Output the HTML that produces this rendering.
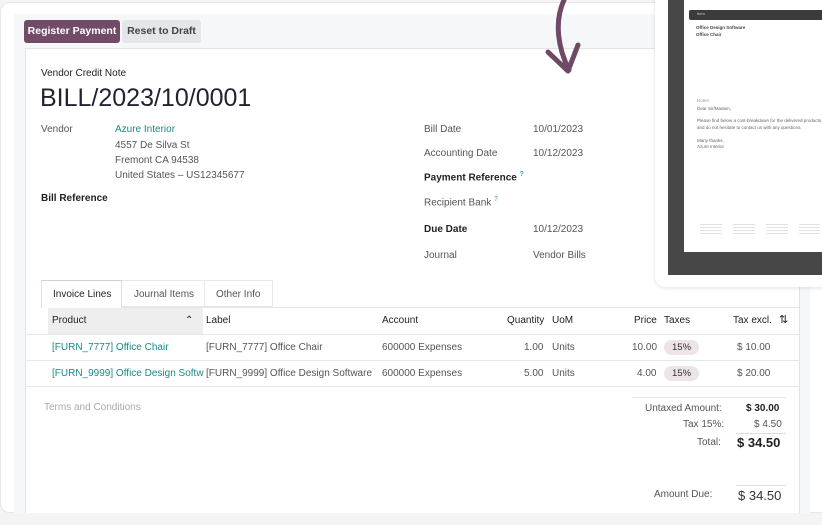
<!DOCTYPE html><html><head><style>
*{box-sizing:border-box;margin:0;padding:0}
body{width:822px;height:525px;overflow:hidden;background:#f4f4f4;font-family:"Liberation Sans",sans-serif;position:relative;color:#222}
.abs{position:absolute}
.outer{left:0;top:2px;width:830px;height:511px;background:#fff;border-radius:10px;border:1px solid #e8e8e8}
.panel{left:14px;top:14px;width:796px;height:499px;background:#f6f7f9}
.sheet{left:25px;top:48px;width:775px;height:465px;background:#fff;border:1px solid #e4e4e4;border-bottom:none}
.btn{top:20px;height:23px;font-size:10.5px;line-height:23px;text-align:center;border-radius:3px;font-weight:bold}
.t{position:absolute;font-size:10px;white-space:nowrap}
.lbl{color:#555}
.link{color:#1a8a87}
.b{font-weight:bold;color:#222}
.badge{position:absolute;background:#ece4e6;border-radius:8px;font-size:9.5px;padding:2px 8px;color:#333}
</style></head><body>
<div class="abs outer"></div>
<div class="abs panel"></div>
<div class="abs btn" style="left:24px;width:96px;background:#714b67;color:#fff">Register Payment</div>
<div class="abs btn" style="left:122px;width:79px;background:#e5e6e9;color:#444">Reset to Draft</div>
<div class="abs sheet"></div>
<svg class="abs" style="left:540px;top:0" width="50" height="80"><path d="M24 0 C14 22,18 48,29 70" stroke="#6f4a64" stroke-width="5" fill="none" stroke-linecap="round"/><path d="M8 52 L28 71 L38 45" stroke="#6f4a64" stroke-width="5" fill="none" stroke-linecap="round" stroke-linejoin="round"/></svg>
<div class="t" style="left:41px;top:68px;font-size:10px">Vendor Credit Note</div>
<div class="t" style="left:40px;top:84px;font-size:25px;color:#1f2430">BILL/2023/10/0001</div>
<div class="t lbl" style="left:41px;top:124px">Vendor</div>
<div class="t link" style="left:115px;top:124px">Azure Interior</div>
<div class="t lbl" style="left:115px;top:140px">4557 De Silva St</div>
<div class="t lbl" style="left:115px;top:155px">Fremont CA 94538</div>
<div class="t lbl" style="left:115px;top:170px">United States – US12345677</div>
<div class="t b" style="left:41px;top:193px">Bill Reference</div>
<div class="t lbl" style="left:424px;top:124px">Bill Date</div><div class="t lbl" style="left:533px;top:124px">10/01/2023</div>
<div class="t lbl" style="left:424px;top:148px">Accounting Date</div><div class="t lbl" style="left:533px;top:148px">10/12/2023</div>
<div class="t b" style="left:424px;top:171px">Payment Reference <sup style="color:#3aa0c8;font-size:7px">?</sup></div>
<div class="t lbl" style="left:424px;top:196px">Recipient Bank <sup style="color:#3aa0c8;font-size:7px">?</sup></div>
<div class="t b" style="left:424px;top:224px">Due Date</div><div class="t lbl" style="left:533px;top:224px">10/12/2023</div>
<div class="t lbl" style="left:424px;top:250px">Journal</div><div class="t lbl" style="left:533px;top:250px">Vendor Bills</div>
<div class="abs" style="left:41px;top:307px;width:759px;border-top:1px solid #e4e4e4"></div>
<div class="abs" style="left:41px;top:280px;width:81px;height:28px;background:#fff;border:1px solid #e0e0e0;border-bottom:none;border-top:1px solid #dccbd4"></div>
<div class="abs" style="left:122px;top:280px;width:83px;height:27px;border:1px solid #e8e8e8;border-left:none"></div>
<div class="abs" style="left:205px;top:280px;width:68px;height:27px;border:1px solid #e8e8e8;border-left:none"></div>
<div class="t" style="left:53px;top:289px">Invoice Lines</div>
<div class="t lbl" style="left:134px;top:289px">Journal Items</div>
<div class="t lbl" style="left:216px;top:289px">Other Info</div>
<div class="abs" style="left:48px;top:308px;width:155px;height:26px;background:#eeeeee"></div>
<div class="t" style="left:52px;top:315px">Product</div><div class="t" style="left:185px;top:315px">&#8963;</div>
<div class="t" style="left:206px;top:315px">Label</div>
<div class="t" style="left:382px;top:315px">Account</div>
<div class="t" style="left:507px;top:315px">Quantity</div>
<div class="t" style="left:552px;top:315px">UoM</div>
<div class="t" style="left:634px;top:315px">Price</div>
<div class="t" style="left:664px;top:315px">Taxes</div>
<div class="t" style="left:733px;top:315px">Tax excl.</div>
<div class="t" style="left:779px;top:313px;font-size:11px">⇅</div>
<div class="abs" style="left:25px;top:334px;width:775px;border-top:1px solid #e6e6e6"></div>
<div class="abs" style="left:25px;top:360px;width:775px;border-top:1px solid #e6e6e6"></div>
<div class="abs" style="left:25px;top:386px;width:775px;border-top:1px solid #e6e6e6"></div>
<div class="t link" style="left:52px;top:342px">[FURN_7777] Office Chair</div>
<div class="t lbl" style="left:206px;top:342px">[FURN_7777] Office Chair</div>
<div class="t lbl" style="left:382px;top:342px">600000 Expenses</div>
<div class="t lbl" style="left:524px;top:342px">1.00</div><div class="t lbl" style="left:552px;top:342px">Units</div>
<div class="t lbl" style="left:632px;top:342px">10.00</div><div class="badge" style="left:664px;top:340px">15%</div>
<div class="t lbl" style="left:737px;top:342px">$ 10.00</div>
<div class="t link" style="left:52px;top:368px;width:152px;overflow:hidden">[FURN_9999] Office Design Software</div>
<div class="t lbl" style="left:206px;top:368px">[FURN_9999] Office Design Software</div>
<div class="t lbl" style="left:382px;top:368px">600000 Expenses</div>
<div class="t lbl" style="left:524px;top:368px">5.00</div><div class="t lbl" style="left:552px;top:368px">Units</div>
<div class="t lbl" style="left:637px;top:368px">4.00</div><div class="badge" style="left:664px;top:366px">15%</div>
<div class="t lbl" style="left:737px;top:368px">$ 20.00</div>
<div class="t" style="left:44px;top:402px;color:#aaa">Terms and Conditions</div>
<div class="abs" style="left:632px;top:397px;width:154px;border-top:1px solid #e6e6e6"></div>
<div class="t lbl" style="left:645px;top:403px">Untaxed Amount:</div><div class="t b" style="left:746px;top:403px">$ 30.00</div>
<div class="t lbl" style="left:683px;top:419px">Tax 15%:</div><div class="t lbl" style="left:754px;top:419px">$ 4.50</div>
<div class="abs" style="left:736px;top:433px;width:50px;border-top:1px solid #ddd"></div>
<div class="t lbl" style="left:697px;top:437px">Total:</div><div class="t b" style="left:737px;top:435px;font-size:13px">$ 34.50</div>
<div class="abs" style="left:736px;top:485px;width:50px;border-top:1px solid #ddd"></div>
<div class="t lbl" style="left:654px;top:489px">Amount Due:</div><div class="t" style="left:738px;top:488px;font-size:13px;color:#333">$ 34.50</div>
<div class="abs" style="left:655px;top:-10px;width:180px;height:297px;background:#fff;border-radius:10px;box-shadow:0 1px 4px rgba(0,0,0,.12)"></div>
<div class="abs" style="left:668px;top:0;width:160px;height:275px;background:#474747"></div>
<div class="abs" style="left:684px;top:0;width:150px;height:252px;background:#fff"></div>
<div class="abs" style="left:689px;top:10px;width:140px;height:10px;background:#3b3b3b;border-radius:2px"></div>
<div class="t" style="left:697px;top:11px;font-size:4px;color:#ccc">Item</div>
<div class="t" style="left:696px;top:25px;font-size:4.5px;font-weight:bold;color:#444">Office Design Software</div>
<div class="t" style="left:696px;top:32px;font-size:4.5px;font-weight:bold;color:#444">Office Chair</div>
<div class="t" style="left:697px;top:98px;font-size:4.5px;color:#999">Notes:</div>
<div class="t" style="left:697px;top:106px;font-size:4.5px;color:#666">Dear Sir/Madam,</div>
<div class="t" style="left:697px;top:118px;font-size:4.5px;color:#666">Please find below a cost-breakdown for the delivered products.</div>
<div class="t" style="left:697px;top:125px;font-size:4.5px;color:#666">and do not hesitate to contact us with any questions.</div>
<div class="t" style="left:697px;top:138px;font-size:4.5px;color:#666">Many thanks,</div>
<div class="t" style="left:697px;top:144px;font-size:4.5px;color:#666">Azure Interior</div>
<div class="abs" style="left:700px;top:224px;width:120px;height:10px;background:repeating-linear-gradient(180deg,#e2e2e2 0 1px,transparent 1px 3px);-webkit-mask:repeating-linear-gradient(90deg,#000 0 22px,transparent 22px 33px);mask:repeating-linear-gradient(90deg,#000 0 22px,transparent 22px 33px)"></div>
</body></html>
